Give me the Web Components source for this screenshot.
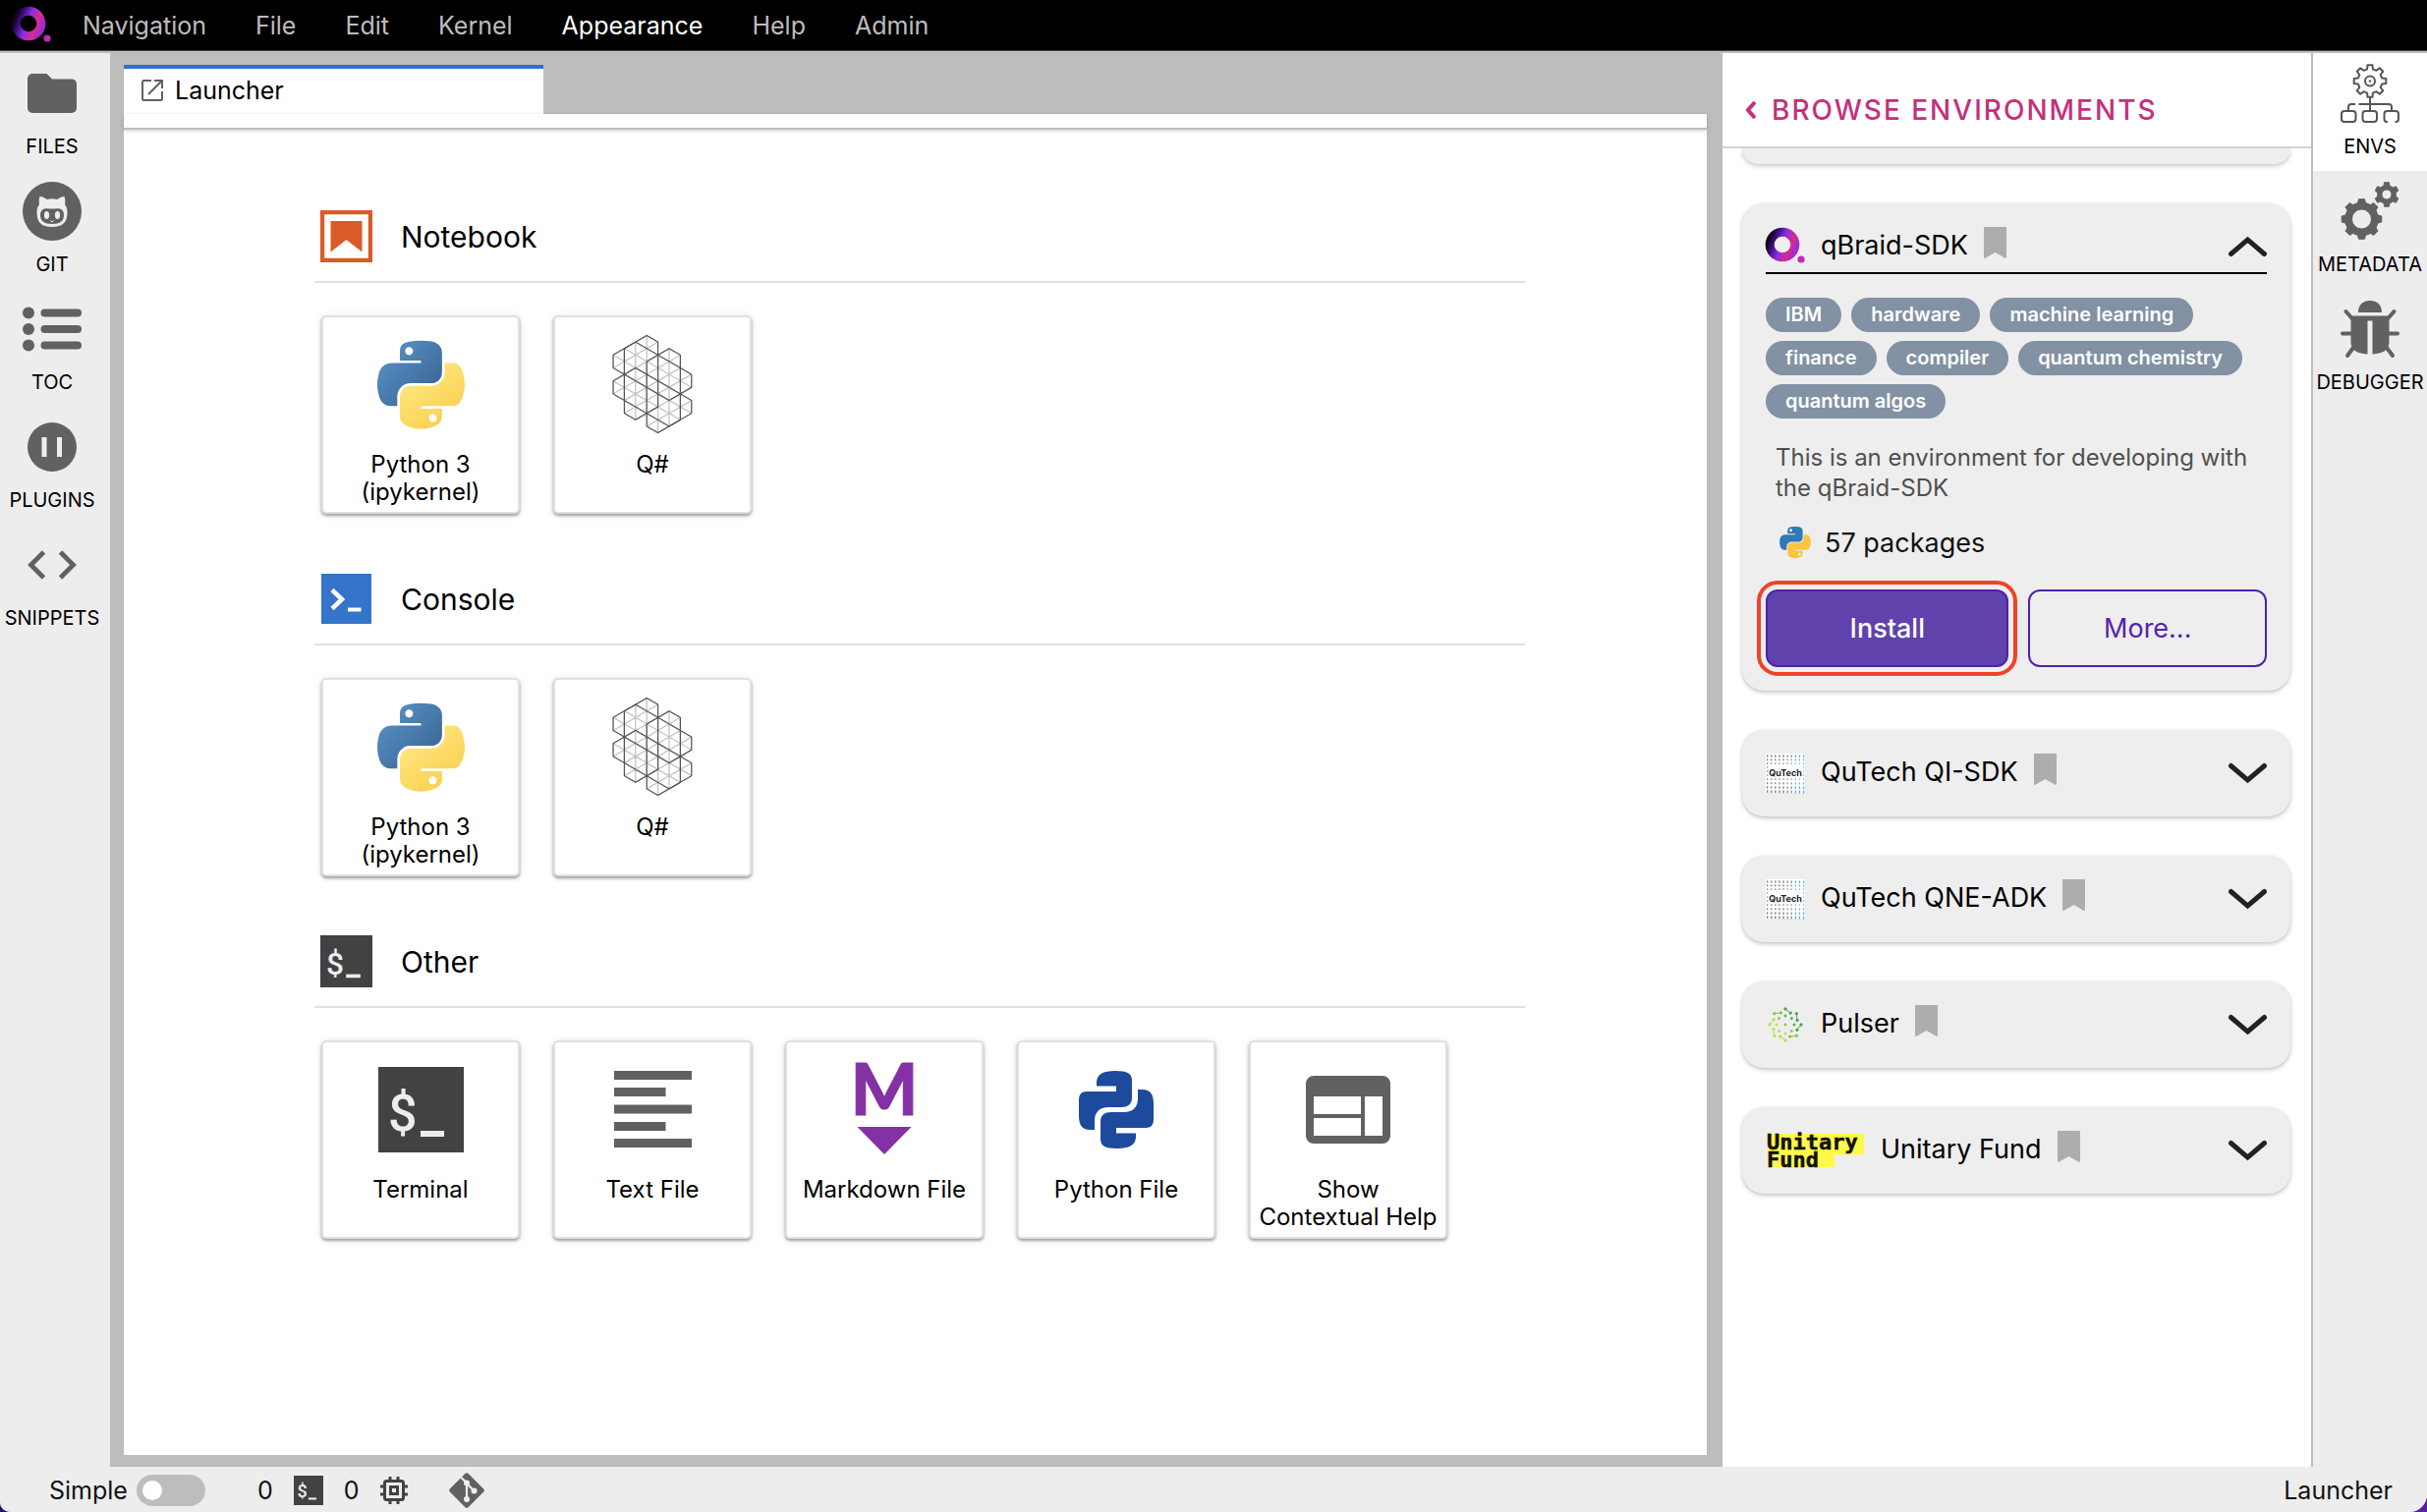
<!DOCTYPE html>
<html lang="en">
<head>
<meta charset="utf-8">
<title>Launcher</title>
<style>
html, body { margin: 0; height: 100%; }
body { font-family: Inter, "Liberation Sans", sans-serif; font-size: 25px; color: #111; background: linear-gradient(90deg, #1f1466, #5a1fa6); overflow: hidden; }
</style>
</head>
<body>
<lab-app></lab-app>

<template id="tpl-app">
<style>
:host { display: flex; flex-direction: column; height: 100vh; background: #bdbdbd; border-radius: 0 0 18px 10px; overflow: hidden; }
.row { flex: 1; min-height: 0; display: flex; padding-top: 2px; }
.dock { flex: 1; min-width: 0; display: flex; flex-direction: column; padding: 12px 16px 12px 14px; }
.main { flex: 1; min-height: 0; background: #fff; padding: 63px 185px 0 194px; overflow: hidden; }
.tabs { display: flex; }
.tab { all: unset; box-sizing: border-box; width: 427px; height: 50px; border-top: 4px solid #2f6fd0; background: #fff; display: flex; align-items: center; gap: 12px; padding: 0 18px 3px; color: #000; }
.toolbar { height: 14px; background: #fff; border-bottom: 2px solid #bdbdbd; box-shadow: 0 1px 4px rgba(0,0,0,.2); z-index: 1; }
</style>
<menu-bar></menu-bar>
<div class="row">
  <side-bar side="left">
    <side-tab icon="folder">FILES</side-tab>
    <side-tab icon="github">GIT</side-tab>
    <side-tab icon="toc">TOC</side-tab>
    <side-tab icon="plugins">PLUGINS</side-tab>
    <side-tab icon="code">SNIPPETS</side-tab>
  </side-bar>
  <div class="dock">
    <div class="tabs" role="tablist"><button class="tab" role="tab" aria-selected="true"><lab-icon name="launch"></lab-icon>Launcher</button></div>
    <div class="toolbar"></div>
    <main class="main">
      <launch-section icon="notebook" heading="Notebook">
        <launch-card icon="python">Python 3 (ipykernel)</launch-card>
        <launch-card icon="qsharp">Q#</launch-card>
      </launch-section>
      <launch-section icon="console" heading="Console">
        <launch-card icon="python">Python 3 (ipykernel)</launch-card>
        <launch-card icon="qsharp">Q#</launch-card>
      </launch-section>
      <launch-section icon="shell" heading="Other">
        <launch-card icon="terminal">Terminal</launch-card>
        <launch-card icon="textfile">Text File</launch-card>
        <launch-card icon="markdown">Markdown File</launch-card>
        <launch-card icon="pyfile">Python File</launch-card>
        <launch-card icon="help">Show Contextual Help</launch-card>
      </launch-section>
    </main>
  </div>
  <env-panel></env-panel>
  <side-bar side="right">
    <side-tab icon="envs" active>ENVS</side-tab>
    <side-tab icon="gears">METADATA</side-tab>
    <side-tab icon="bug">DEBUGGER</side-tab>
  </side-bar>
</div>
<status-bar></status-bar>
</template>

<template id="tpl-menu">
<style>
:host { display: flex; align-items: center; height: 51px; background: #000; border-bottom: 1px solid #424242; padding-left: 12px; gap: 7px; }
nav { display: flex; }
button { all: unset; padding: 1px 25px 0; line-height: 50px; color: #bdbdbd; }
.on { color: #fff; }
</style>
<lab-icon name="qbraid"></lab-icon>
<nav aria-label="Main menu">
  <button>Navigation</button><button>File</button><button>Edit</button><button>Kernel</button><button class="on">Appearance</button><button>Help</button><button>Admin</button>
</nav>
</template>

<template id="tpl-sidebar">
<style>
:host { display: block; box-sizing: border-box; flex: none; background: #ededed; }
:host([side="left"]) { width: 112px; padding-right: 6px; }
:host([side="right"]) { width: 116px; }
</style>
<slot></slot>
</template>

<template id="tpl-sidetab">
<style>
:host { display: block; height: 120px; }
:host([active]) { background: #fff; }
button { all: unset; box-sizing: border-box; width: 100%; height: 100%; padding-top: 11px; display: flex; flex-direction: column; align-items: center; gap: 12px; font-size: 20px; line-height: 24px; color: #000; white-space: nowrap; }
.pic { height: 60px; display: flex; align-items: center; }
</style>
<button><span class="pic"><lab-icon></lab-icon></span><span><slot></slot></span></button>
</template>

<template id="tpl-section">
<style>
:host { display: block; margin-bottom: 41px; }
header { display: flex; align-items: center; gap: 29px; height: 91px; padding-left: 6px; border-bottom: 2px solid #e0e0e0; margin-bottom: 33px; }
h2 { margin: 0; font-size: 30px; font-weight: 400; color: #000; }
.cards { display: flex; gap: 34px; padding-left: 7px; }
</style>
<header><lab-icon></lab-icon><h2></h2></header>
<div class="cards"><slot></slot></div>
</template>

<template id="tpl-card">
<style>
:host { display: block; width: 202px; height: 202px; flex: none; }
button { all: unset; box-sizing: border-box; width: 100%; height: 100%; display: flex; flex-direction: column; align-items: center; border: 2px solid #e0e0e0; border-radius: 5px; background: #fff; box-shadow: 0 2px 3px rgba(0,0,0,.35), 0 1px 8px rgba(0,0,0,.1); }
.pic { height: 136px; display: flex; align-items: center; }
.label { padding: 0 5px; font-size: 24px; line-height: 28px; text-align: center; color: #000; }
</style>
<button><span class="pic"><lab-icon></lab-icon></span><span class="label"><slot></slot></span></button>
</template>

<template id="tpl-panel">
<style>
:host { display: flex; flex-direction: column; box-sizing: border-box; width: 601px; flex: none; background: #fff; border-right: 2px solid #bdbdbd; }
header { display: flex; align-items: center; box-sizing: border-box; height: 97px; padding: 20px 22px 0; border-bottom: 2px solid #d4d4d4; }
.back { all: unset; display: flex; align-items: center; gap: 15px; color: #c4307c; font-size: 28px; font-weight: 500; letter-spacing: 2px; }
.list { flex: 1; min-height: 0; overflow: hidden; display: flex; flex-direction: column; gap: 40px; padding: 0 21px 0 20px; }
.prev { height: 16px; flex: none; background: #eee; border-radius: 0 0 22px 22px; box-shadow: 0 2px 4px rgba(0,0,0,.22); }
.tags { display: flex; flex-wrap: wrap; gap: 9px 10px; margin: 24px 0; padding: 0; list-style: none; }
.tags li { height: 35px; line-height: 34px; padding: 0 20px; border-radius: 18px; background: #8291a3; color: #fff; font-size: 20px; font-weight: 600; }
p { margin: 0 8px 24px 10px; font-size: 24px; line-height: 31px; color: #505050; }
.pkgs { display: flex; align-items: center; gap: 14px; height: 32px; margin: 0 14px 32px; font-size: 27px; }
.actions { display: grid; grid-template-columns: 248fr 243fr; gap: 20px; }
.actions button { all: unset; box-sizing: border-box; height: 79px; border: 2px solid #4f22ac; border-radius: 12px; text-align: center; font-size: 27px; color: #5424aa; }
.actions .install { background: #6042ad; color: #fff; font-weight: 500; outline: 4px solid #ee4329; outline-offset: 5px; }
</style>
<header><button class="back"><lab-icon name="back"></lab-icon>BROWSE ENVIRONMENTS</button></header>
<div class="list">
  <div class="prev"></div>
  <env-card logo="qbraid" heading="qBraid-SDK" open>
    <ul class="tags"><li>IBM</li><li>hardware</li><li>machine learning</li><li>finance</li><li>compiler</li><li>quantum chemistry</li><li>quantum algos</li></ul>
    <p>This is an environment for developing with the qBraid-SDK</p>
    <div class="pkgs"><lab-icon name="pysmall"></lab-icon><span>57 packages</span></div>
    <div class="actions"><button class="install">Install</button><button>More...</button></div>
  </env-card>
  <env-card logo="qutech" heading="QuTech QI-SDK"></env-card>
  <env-card logo="qutech" heading="QuTech QNE-ADK"></env-card>
  <env-card logo="pulser" heading="Pulser"></env-card>
  <env-card logo="unitary" heading="Unitary Fund"></env-card>
</div>
</template>

<template id="tpl-env">
<style>
:host { display: block; flex: none; padding: 24px; border-radius: 22px; background: #eee; box-shadow: 0 2px 4px rgba(0,0,0,.22), 0 0 3px rgba(0,0,0,.06); }
header { display: flex; align-items: center; gap: 16px; height: 40px; }
:host([open]) header { padding-bottom: 6px; border-bottom: 2px solid #000; }
h3 { margin: 0; padding-bottom: 2px; font-size: 27px; line-height: 36px; font-weight: 400; color: #000; }
button { all: unset; display: block; }
.mark { align-self: flex-start; }
.toggle { margin-left: auto; }
</style>
<header><lab-icon class="logo"></lab-icon><h3></h3><button class="mark" aria-label="Bookmark"><lab-icon name="bookmark"></lab-icon></button><button class="toggle" aria-label="Toggle details"><lab-icon class="chev"></lab-icon></button></header>
<slot></slot>
</template>

<template id="tpl-status">
<style>
:host { display: flex; align-items: center; box-sizing: border-box; height: 46px; padding: 2px 35px 0 50px; background: #ededed; color: #111; }
label { display: flex; align-items: center; gap: 9px; margin-right: 53px; }
input { appearance: none; margin: 0; width: 70px; height: 32px; border-radius: 16px; background: #bdbdbd; display: flex; align-items: center; padding-left: 6px; }
input::before { content: ""; width: 20px; height: 20px; border-radius: 50%; background: #fff; }
.group { display: flex; align-items: center; gap: 21px; margin-right: 42px; }
.end { margin-left: auto; }
</style>
<label>Simple<input type="checkbox" role="switch"></label>
<div class="group"><span>0</span><lab-icon name="shellsmall"></lab-icon><span>0</span><lab-icon name="chip"></lab-icon></div>
<lab-icon name="git"></lab-icon>
<span class="end">Launcher</span>
</template>

<script>
/* Outline of a gear with n teeth centred on (cx, cy). */
function gear(cx, cy, n, ro, ri) {
  const step = Math.PI * 2 / n, pts = [];
  for (let i = 0; i < n; i++) {
    const a = i * step - Math.PI / 2;
    [[-.3, ri], [-.19, ro], [.19, ro], [.3, ri]].forEach(([k, r]) =>
      pts.push((cx + r * Math.cos(a + k * step)).toFixed(1) + ' ' + (cy + r * Math.sin(a + k * step)).toFixed(1)));
  }
  return 'M' + pts.join('L') + 'Z';
}
function circle(cx, cy, r) { return `M${cx - r} ${cy}a${r} ${r} 0 1 0 ${2 * r} 0a${r} ${r} 0 1 0 ${-2 * r} 0Z`; }

/* Triangular lattice of the Q# mark: 7 columns by 15 half rows. */
function qsharp() {
  const X = 11.4, Y = 6.6;
  const P = l => l.map(([c, k]) => (c * X).toFixed(1) + ',' + (k * Y).toFixed(1)).join(' ');
  const polys = [
    [[0,3],[2,1],[7,6],[7,8],[5,10],[0,5]], [[0,7],[2,5],[7,10],[7,12],[5,14],[0,9]],
    [[1,2],[3,0],[4,1],[4,11],[2,13],[1,12]], [[3,4],[5,2],[6,3],[6,13],[4,15],[3,14]]
  ].map(p => `<polygon points="${P(p)}"/>`).join('');
  let d = '';
  for (let c = 0; c <= 7; c++) d += `M${c * X} 0V${15 * Y}`;
  for (let k = -7; k <= 22; k += 1) if (Math.abs(k) % 2) d += `M0 ${k * Y}L${7 * X} ${(k + 7) * Y}M0 ${k * Y}L${7 * X} ${(k - 7) * Y}`;
  return `<clipPath id="q">${polys}</clipPath><path clip-path="url(#q)" d="${d}" fill="none" stroke="#c4c4c4" stroke-width="1.300"/><g fill="none" stroke="#555" stroke-width="1.200">${polys}</g>`;
}
/* Dot grid behind the QuTech name, growing and turning blue to the right. */
function qutech() {
  let s = '<rect width="40" height="40" fill="#fff"/>';
  for (let r = 0; r < 10; r++) for (let c = 0; c < 10; c++) {
    if (r > 2 && r < 6 && c > 0 && c < 9) continue;
    const h = 1.4 + (r < 3 ? (2 - r) : (r - 6)) * .35 * (1 + c / 9);
    s += `<rect x="${(1 + c * 4.1).toFixed(1)}" y="${(1.4 + r * 4).toFixed(1)}" width="1.3" height="${Math.max(1.2, h).toFixed(1)}" fill="${c > 6 ? '#6bb4da' : c > 4 ? '#7d98a8' : '#777'}"/>`;
  }
  return s + '<text x="20" y="23" text-anchor="middle" font-family="Inter, sans-serif" font-weight="700" font-size="9" fill="#222">QuTech</text>';
}
/* Pulser: rings of green dots joined by short arms. */
function pulser() {
  let s = '<g transform="translate(20 20)">';
  const col = a => Math.cos(a + .8) > .3 ? '#4fa64a' : Math.cos(a + .8) > -.5 ? '#83c945' : '#b4e34c';
  s += '<circle r="1.4" fill="#7cc54a"/>';
  for (let i = 0; i < 8; i++) {
    const a = i * Math.PI / 4 - Math.PI / 2, b = a + .42, q = (r, t) => [(r * Math.cos(t)).toFixed(1), (r * Math.sin(t)).toFixed(1)];
    const o = q(16, a), e = q(13, b), m = q(9, a);
    s += `<g fill="${col(a)}" stroke="${col(a)}"><path d="M${o}L${e}" stroke-width="1"/><circle cx="${o[0]}" cy="${o[1]}" r="1.2"/><circle cx="${e[0]}" cy="${e[1]}" r="1.2"/><circle cx="${m[0]}" cy="${m[1]}" r="1"/></g>`;
  }
  return s + '</g>';
}
const PY_TOP = 'M54.92 0C50.34 .02 45.96 .41 42.11 1.09 30.76 3.1 28.7 7.29 28.7 15.03v10.22h26.81v3.41H18.64c-7.79 0-14.62 4.68-16.75 13.59-2.46 10.21-2.57 16.59 0 27.25 1.91 7.94 6.46 13.59 14.25 13.59h9.22V70.84c0-8.85 7.66-16.66 16.75-16.66h26.78c7.45 0 13.41-6.14 13.41-13.62V15.03c0-7.27-6.13-12.72-13.41-13.94C64.28.33 59.5-.02 54.92 0zM40.42 8.22c2.77 0 5.03 2.3 5.03 5.12 0 2.82-2.26 5.09-5.03 5.09-2.78 0-5.03-2.27-5.03-5.09 0-2.82 2.25-5.12 5.03-5.12z';
const PY_BOT = 'M85.64 28.66v11.9c0 9.23-7.83 17-16.75 17H42.11c-7.34 0-13.41 6.28-13.41 13.63v25.53c0 7.27 6.32 11.54 13.41 13.62 8.49 2.5 16.63 2.95 26.78 0 6.75-1.95 13.41-5.89 13.41-13.62V86.5H55.52v-3.41H95.7c7.79 0 10.7-5.43 13.41-13.59 2.8-8.4 2.68-16.48 0-27.25-1.93-7.76-5.61-13.59-13.41-13.59zM70.57 93.31c2.78 0 5.03 2.28 5.03 5.1 0 2.82-2.25 5.12-5.03 5.12-2.77 0-5.03-2.3-5.03-5.12 0-2.82 2.26-5.1 5.03-5.1z';
const PYF = 'M18 15.5V11C19 3.5 24 0 37 0S53.5 3 54 9V28C53.5 34 50 37 43 37H29C20 37.500 16 43 16 51V60H11C3.500 60 0 55 0 46V30C0 24 2.500 21 8 21H38V15.500Z';
const shellArt = '<rect width="87" height="87" fill="#424242"/><text x="10" y="65" font-family="Roboto, sans-serif" font-weight="500" font-size="52" fill="#ededed">$</text><rect x="43" y="65" width="24" height="6" fill="#ededed"/>';

/* name: [width, height, viewBox, markup] */
const ICONS = {
  folder: [50, 40, '0 0 50 40', '<path fill="#616161" d="M5 0h14.500l5.500 5.500h20a5 5 0 0 1 5 5V35a5 5 0 0 1-5 5H5a5 5 0 0 1-5-5V5a5 5 0 0 1 5-5z"/>'],
  github: [60, 60, '0 0 60 60', '<circle cx="30" cy="30" r="30" fill="#616161"/><path fill="#ededed" d="M17.500 15c2.500 0 5.500 1.500 7.500 3 3-1 7-1 10 0 2-1.500 5-3 7.500-3 1 3 1 5.500.5 8 2 2.500 2.500 5 2.500 8.500C45.500 41 41 46 30 46S14.500 41 14.500 31.500c0-3.500.5-6 2.500-8.500-.5-2.500-.5-5 .5-8z"/><path fill="#616161" d="M22 27.500c3-.8 5 0 8 0s5-.8 8 0c3 1 4 3.500 4 6.500 0 6-4 9-12 9s-12-3-12-9c0-3 1-5.500 4-6.500z"/><ellipse cx="24.500" cy="34" rx="2.600" ry="4" fill="#ededed"/><ellipse cx="35.500" cy="34" rx="2.600" ry="4" fill="#ededed"/><path d="M28.500 39.500 30 41l1.500-1.500" stroke="#ededed" fill="none"/>'],
  toc: [60, 46, '0 0 60 46', '<g fill="#616161"><circle cx="6" cy="6.500" r="6"/><circle cx="6" cy="23" r="6"/><circle cx="6" cy="39.500" r="6"/><rect x="18.500" y="2.500" width="41.500" height="8" rx="4"/><rect x="18.500" y="19" width="41.500" height="8" rx="4"/><rect x="18.500" y="35.500" width="41.500" height="8" rx="4"/></g>'],
  plugins: [50, 50, '0 0 50 50', '<circle cx="25" cy="25" r="25" fill="#616161"/><path fill="#ededed" d="M14.500 15h5v20h-5zM30 15h5v20h-5z"/>'],
  code: [50, 30, '0 0 50 30', '<path fill="none" stroke="#616161" stroke-width="4.800" d="M16.500 2 3.500 15l13 13M33.500 2l13 13-13 13"/>'],
  launch: [22, 22, '0 0 22 22', '<g fill="none" stroke="#616161" stroke-width="2"><path d="M10 1H2.500Q1 1 1 2.500v17Q1 21 2.500 21h17q1.500 0 1.500-1.500V12"/><path d="M13 1h8v8M21 1 7 15"/></g>'],
  qbraid: [40, 40, '0 0 40 40', '<defs><linearGradient id="g" x1="0" y1=".2" x2="1" y2=".6"><stop offset="0" stop-color="#12021f"/><stop offset=".22" stop-color="#3b0f80"/><stop offset=".5" stop-color="#8e2de2"/><stop offset=".85" stop-color="#d92c86"/><stop offset="1" stop-color="#a52bd0"/></linearGradient></defs><circle cx="17" cy="18" r="12.800" fill="none" stroke="url(#g)" stroke-width="9"/><circle cx="36" cy="33" r="3.600" fill="#c22bb0"/>'],
  notebook: [53, 53, '0 0 53 53', '<path fill="none" stroke="#d95b28" stroke-width="4.200" d="M2.100 2.100h48.800v48.800H2.100z"/><path fill="#d95b28" d="M10.500 11h32v31.500L26.500 30l-16 12.500z"/>'],
  console: [53, 53, '0 0 53 53', '<path fill="#3574cb" d="M1 1h51v51H1z"/><path fill="none" stroke="#fff" stroke-width="4.500" d="m12 17.500 10 9.500-10 9.500"/><path fill="#fff" d="M28 35.500h13.500v4H28z"/>'],
  shell: [53, 53, '0 0 87 87', shellArt],
  terminal: [87, 87, '0 0 87 87', shellArt],
  shellsmall: [30, 30, '0 0 87 87', shellArt],
  python: [89, 91, '0 0 111.200 112', `<defs><linearGradient id="a" x1="0" y1="0" x2="1" y2="1"><stop offset="0" stop-color="#5e97cb"/><stop offset="1" stop-color="#335f8d"/></linearGradient><linearGradient id="b" x1=".2" y1=".1" x2=".8" y2=".9"><stop offset="0" stop-color="#ffe883"/><stop offset="1" stop-color="#f9cf4f"/></linearGradient></defs><path fill="url(#a)" d="${PY_TOP}"/><path fill="url(#b)" d="${PY_BOT}"/>`],
  pysmall: [32, 32, '0 0 111.200 112', `<path fill="#3178b8" d="${PY_TOP}"/><path fill="#fbc441" d="${PY_BOT}"/>`],
  qsharp: [82, 102, '-1 -1 82 101', qsharp()],
  textfile: [79, 78, '0 0 79 78', '<path fill="#616161" d="M0 0h79v9H0zM0 17h52.500v9H0zM0 34.500h79v9H0zM0 52h52.500v9H0zM0 69h79v9H0z"/>'],
  markdown: [66, 92, '0 0 66 92', '<text x="33" y="52" text-anchor="middle" font-family="Lato, sans-serif" font-weight="900" font-size="72" fill="#8431a5" stroke="#8431a5" stroke-width="1">M</text><path fill="#8431a5" d="M5.500 64h55L33 92z"/>'],
  pyfile: [76, 79, '0 0 76 79', `<path fill="#1d4a9c" d="${PYF}"/><path fill="#1d4a9c" transform="rotate(180 38 39.500)" d="${PYF}"/>`],
  help: [86, 69, '0 0 86 69', '<path fill="#616161" fill-rule="evenodd" d="M8 0h70a8 8 0 0 1 8 8v53a8 8 0 0 1-8 8H8a8 8 0 0 1-8-8V8a8 8 0 0 1 8-8zM8 21v18h48V21zM8 43v18h48V43zM60 21v40h18V21z"/>'],
  back: [13, 18, '0 0 13 18', '<path fill="none" stroke="#c4307c" stroke-width="4" d="M11 1 4 9l7 8"/>'],
  bookmark: [23, 32, '0 0 23 32', '<path fill="#adadad" d="M0 0h23v31q0 1-1 1l-10.500-6L1 32q-1 0-1-1z"/>'],
  up: [39, 20, '0 0 39 20', '<path fill="none" stroke="#222" stroke-width="5" stroke-linecap="round" d="m2.500 17.500 17-14.500 17 14.500"/>'],
  down: [39, 20, '0 0 39 20', '<path fill="none" stroke="#222" stroke-width="5" stroke-linecap="round" d="m2.500 2.500 17 14.500 17-14.500"/>'],
  qutech: [40, 40, '0 0 40 40', qutech()],
  pulser: [40, 40, '0 0 40 40', pulser()],
  unitary: [101, 40, '0 0 101 40', '<path fill="#fff94a" d="M2 3h98v21.500H70V37H2z"/><text font-family="\'DejaVu Sans Mono\', monospace" font-weight="700" font-size="22" fill="#111" stroke="#111" stroke-width=".5"><tspan x="1" y="19">Unitary</tspan><tspan x="1" y="36.500">Fund</tspan></text>'],
  envs: [60, 60, '0 0 60 60', `<g fill="none" stroke="#555" stroke-width="2" stroke-linejoin="round"><path d="${gear(30, 17.500, 8, 16.500, 12.500)}"/><circle cx="30" cy="17.500" r="5"/><path d="M30 34v13M8 47v-3q0-3 3-3h4M18.500 41H49q3 0 3 3v3"/><rect x="1" y="48" width="14.500" height="11" rx="3"/><rect x="22.500" y="48" width="14.500" height="11" rx="3"/><path d="M48 59h-1q-2.500 0-2.500-3v-5q0-3 3-3h8.500q3 0 3 3v5q0 3-2.500 3h-1"/></g><circle cx="30" cy="17.500" r="1.200" fill="#555"/>`],
  gears: [60, 60, '0 0 60 60', `<path fill="#616161" fill-rule="evenodd" stroke="#616161" stroke-linejoin="round" d="${gear(21.500, 38, 8, 20.500, 17)}${circle(21.500, 38, 10)}${gear(47, 13, 6, 12.500, 9.500)}${circle(47, 13, 5)}"/>`],
  bug: [60, 60, '0 0 60 60', '<path fill="#616161" d="M18 13C18 5 23 1 30 1s12 4 12 12zM10.500 16.500h39V43c0 7-5 12-17 12.500v-34h-5v34C15.500 55 10.500 50 10.500 43z"/><path fill="none" stroke="#616161" stroke-width="4" stroke-linecap="round" d="m5.500 12 7 8M54.500 12l-7 8M2 34.500h10M48 34.500h10M14 47.500 7 57M46 47.500 53 57"/>'],
  chip: [28, 28, '0 0 28 28', '<g fill="none" stroke="#424242" stroke-width="3"><rect x="4.500" y="4.500" width="19" height="19" rx="2"/><rect x="10.500" y="10.500" width="7" height="7"/><path d="M10 0v4M18 0v4M10 24v4M18 24v4M0 10h4M0 18h4M24 10h4M24 18h4"/></g>'],
  git: [36, 36, '0 0 36 36', '<path fill="#616161" d="M16.500.8q1.500-1.300 3 0L35.200 16.500q1.300 1.500 0 3L19.500 35.200q-1.500 1.300-3 0L.8 19.500q-1.300-1.500 0-3z"/><g stroke="#ededed" stroke-width="2.200" fill="none"><path d="M12 4.500 18 10.500V27M18 11l7 7"/></g><g fill="#ededed"><circle cx="18" cy="10.500" r="3"/><circle cx="18" cy="27" r="3"/><circle cx="25.500" cy="18.500" r="3"/></g>']
};

class LabIcon extends HTMLElement {
  static observedAttributes = ['name'];
  constructor() { super(); this.attachShadow({ mode: 'open' }); }
  attributeChangedCallback() {
    const [w, h, box, art] = ICONS[this.getAttribute('name')];
    this.shadowRoot.innerHTML = `<style>:host{display:block;flex:none}svg{display:block;overflow:visible}</style><svg width="${w}" height="${h}" viewBox="${box}" aria-hidden="true">${art}</svg>`;
  }
}
customElements.define('lab-icon', LabIcon);

class Templated extends HTMLElement {
  connectedCallback() {
    if (this.shadowRoot) return;
    const root = this.attachShadow({ mode: 'open' });
    root.append(document.getElementById(this.constructor.template).content.cloneNode(true));
    this.fill(root);
  }
  fill() {}
}
customElements.define('menu-bar', class extends Templated { static template = 'tpl-menu'; });
customElements.define('side-bar', class extends Templated { static template = 'tpl-sidebar'; });
customElements.define('side-tab', class extends Templated {
  static template = 'tpl-sidetab';
  fill(r) { r.querySelector('lab-icon').setAttribute('name', this.getAttribute('icon')); }
});
customElements.define('launch-section', class extends Templated {
  static template = 'tpl-section';
  fill(r) { r.querySelector('lab-icon').setAttribute('name', this.getAttribute('icon')); r.querySelector('h2').textContent = this.getAttribute('heading'); }
});
customElements.define('launch-card', class extends Templated {
  static template = 'tpl-card';
  fill(r) { r.querySelector('lab-icon').setAttribute('name', this.getAttribute('icon')); }
});
customElements.define('env-card', class extends Templated {
  static template = 'tpl-env';
  fill(r) {
    r.querySelector('.logo').setAttribute('name', this.getAttribute('logo'));
    r.querySelector('h3').textContent = this.getAttribute('heading');
    r.querySelector('.chev').setAttribute('name', this.hasAttribute('open') ? 'up' : 'down');
  }
});
customElements.define('env-panel', class extends Templated { static template = 'tpl-panel'; });
customElements.define('status-bar', class extends Templated { static template = 'tpl-status'; });
customElements.define('lab-app', class extends Templated { static template = 'tpl-app'; });
</script>
</body>
</html>
